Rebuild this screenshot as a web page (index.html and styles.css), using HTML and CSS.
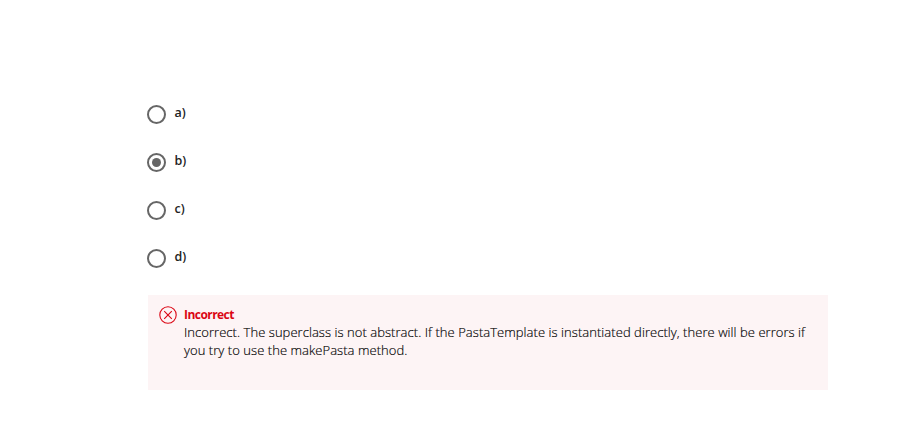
FILE: index.html
```html
<!DOCTYPE html>
<html lang="en">
<head>
<meta charset="utf-8">
<title>Quiz</title>
<link rel="stylesheet" href="styles.css">
</head>
<body>
<main class="quiz">
  <div class="options">
    <div class="option"><span class="radio"></span><span class="label">a)</span></div>
    <div class="option"><span class="radio checked"></span><span class="label">b)</span></div>
    <div class="option"><span class="radio"></span><span class="label">c)</span></div>
    <div class="option"><span class="radio"></span><span class="label">d)</span></div>
  </div>
  <section class="feedback">
    <svg class="icon" width="18" height="18" viewBox="0 0 18 18" fill="none" stroke="#db0614" stroke-width="1.1"><circle cx="9" cy="9" r="8.2"/><path d="M5.2 5.2l7.6 7.6M12.8 5.2l-7.6 7.6"/></svg>
    <div class="body">
      <div class="title">Incorrect</div>
      <p class="text">Incorrect. The superclass is not abstract. If the PastaTemplate is instantiated directly, there will be errors if<br>you try to use the makePasta method.</p>
    </div>
  </section>
</main>
</body>
</html>
```
FILE: styles.css
```css
body { margin: 0; background: #fff; font-family: "Open Sans", sans-serif; font-size: 13px; color: #1f1f1f; }
.quiz { width: 681px; padding: 90px 0 0 147px; }
.option { display: flex; align-items: center; height: 48px; gap: 8.5px; }
.radio { box-sizing: border-box; width: 19px; height: 19px; border: 2px solid #666; border-radius: 50%; display: flex; align-items: center; justify-content: center; }
.checked::after { content: ""; width: 9px; height: 9px; border-radius: 50%; background: #666; }
.label { font-weight: 600; font-size: 12.5px; line-height: 18px; margin-top: -3px; color: #222; }
.feedback { box-sizing: border-box; display: flex; gap: 7px; margin: 13px 0 0 1px; height: 95px; padding: 11px 0 0 11px; background: #fdf4f5; }
.icon { flex: none; }
.title { font-weight: 700; font-size: 12px; line-height: 18px; letter-spacing: -0.55px; color: #db0614; }
.text { margin: -1px 0 0; font-weight: 300; font-size: 13px; line-height: 18px; letter-spacing: 0.051px; white-space: nowrap; color: #000; -webkit-text-stroke: 0.15px #000; }
```
